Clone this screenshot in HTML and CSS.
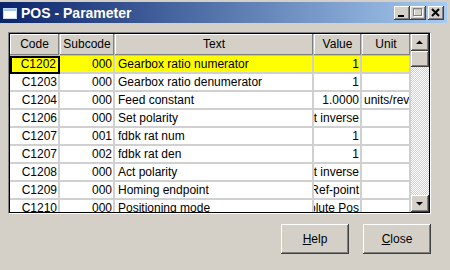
FILE: index.html
```html
<!DOCTYPE html>
<html lang="en">
<head>
  <meta charset="UTF-8">
  <title>POS - Parameter</title>
  <link rel="stylesheet" href="styles.css">
</head>
<body>
  <div class="window">
    <div class="titlebar">
      <svg class="app-icon" width="14" height="11" viewBox="0 0 14 11">
        <rect x="0.5" y="0.5" width="13" height="10" fill="#fff" stroke="#c8d8f0"/>
        <rect x="1" y="1" width="12" height="2" fill="#a6caf0"/>
      </svg>
      <span class="title">POS - Parameter</span>
      <div class="caption-buttons">
        <div class="cap-btn">
          <svg width="16" height="14" viewBox="0 0 16 14"><rect x="4" y="9" width="6" height="2" fill="#000"/></svg>
        </div>
        <div class="cap-btn">
          <svg width="16" height="14" viewBox="0 0 16 14">
            <rect x="4.5" y="3.5" width="8" height="7" fill="none" stroke="#fff"/>
            <rect x="3.5" y="2.5" width="8" height="7" fill="none" stroke="#808080"/>
            <rect x="3.5" y="2.5" width="8" height="1" fill="#808080"/>
          </svg>
        </div>
        <div class="cap-btn close">
          <svg width="16" height="14" viewBox="0 0 16 14">
            <path d="M4 3 L11 10 M11 3 L4 10" stroke="#000" stroke-width="2"/>
          </svg>
        </div>
      </div>
    </div>

    <div class="client">
      <div class="grid-frame">
        <div class="grid">
          <div class="head">Code</div>
          <div class="head">Subcode</div>
          <div class="head">Text</div>
          <div class="head">Value</div>
          <div class="head">Unit</div>

          <div class="cell num selected row-hl focus">C1202</div>
          <div class="cell num row-hl">000</div>
          <div class="cell row-hl">Gearbox ratio numerator</div>
          <div class="cell num row-hl"><span>1</span></div>
          <div class="cell unit row-hl"></div>

          <div class="cell num">C1203</div>
          <div class="cell num">000</div>
          <div class="cell">Gearbox ratio denumerator</div>
          <div class="cell num"><span>1</span></div>
          <div class="cell unit"></div>

          <div class="cell num">C1204</div>
          <div class="cell num">000</div>
          <div class="cell">Feed constant</div>
          <div class="cell num"><span>1.0000</span></div>
          <div class="cell unit">units/rev</div>

          <div class="cell num">C1206</div>
          <div class="cell num">000</div>
          <div class="cell">Set polarity</div>
          <div class="cell num"><span>Not inverse</span></div>
          <div class="cell unit"></div>

          <div class="cell num">C1207</div>
          <div class="cell num">001</div>
          <div class="cell">fdbk rat num</div>
          <div class="cell num"><span>1</span></div>
          <div class="cell unit"></div>

          <div class="cell num">C1207</div>
          <div class="cell num">002</div>
          <div class="cell">fdbk rat den</div>
          <div class="cell num"><span>1</span></div>
          <div class="cell unit"></div>

          <div class="cell num">C1208</div>
          <div class="cell num">000</div>
          <div class="cell">Act polarity</div>
          <div class="cell num"><span>Not inverse</span></div>
          <div class="cell unit"></div>

          <div class="cell num">C1209</div>
          <div class="cell num">000</div>
          <div class="cell">Homing endpoint</div>
          <div class="cell num"><span>Ref-point</span></div>
          <div class="cell unit"></div>

          <div class="cell num">C1210</div>
          <div class="cell num">000</div>
          <div class="cell">Positioning mode</div>
          <div class="cell num"><span>Absolute Pos</span></div>
          <div class="cell unit"></div>
        </div>

        <div class="scrollbar">
          <div class="sb-btn">
            <svg width="17" height="17" viewBox="0 0 17 17"><path d="M5 10 H12 L8.5 6.5 Z" fill="#000"/></svg>
          </div>
          <div class="sb-thumb"></div>
          <div class="sb-track"></div>
          <div class="sb-btn">
            <svg width="17" height="17" viewBox="0 0 17 17"><path d="M5 7 H12 L8.5 10.5 Z" fill="#000"/></svg>
          </div>
        </div>
      </div>

      <div class="actions">
        <button class="btn"><u>H</u>elp</button>
        <button class="btn"><u>C</u>lose</button>
      </div>
    </div>
  </div>
</body>
</html>
```

FILE: styles.css
```css
body {
  margin: 0;
  width: 450px;
  height: 270px;
  overflow: hidden;
  background: #d4d0c8;
  font-family: "Liberation Sans", Arial, sans-serif;
  font-size: 12px;
  color: #000;
}

.window {
  height: 270px;
  padding-top: 2px;
  padding-right: 3px;
  box-sizing: border-box;
  background: #d4d0c8;
  display: flex;
  flex-direction: column;
}

/* caption */
.titlebar {
  height: 21px;
  display: flex;
  align-items: center;
  background: linear-gradient(to right, #0a246a, #a6caf0);
  color: #fff;
  padding-left: 3px;
}
.app-icon {
  display: block;
  margin-top: 2px;
}
.title {
  margin-left: 4px;
  font-weight: bold;
  font-size: 14px;
}
.caption-buttons {
  margin-left: auto;
  margin-right: 3px;
  display: flex;
}
.cap-btn {
  width: 16px;
  height: 14px;
  background: #d4d0c8;
  box-shadow: inset -1px -1px #404040, inset 1px 1px #fff, inset -2px -2px #808080;
}
.cap-btn svg {
  display: block;
}
.cap-btn.close {
  margin-left: 2px;
}

/* client area */
.client {
  flex: 1;
  padding: 9px 16px 0 8px;
}
.grid-frame {
  display: flex;
  width: 419px;
  height: 178px;
  border: 1px solid;
  border-color: #808080 #fff #fff #808080;
  box-shadow: inset 1px 1px #000, inset -1px -1px #000;
  padding: 1px;
  background: #fff;
}
.grid {
  display: grid;
  grid-template-columns: 50px 55px 199px 48px 49px;
  grid-auto-rows: 18px;
  grid-template-rows: 22px;
  overflow: hidden;
  width: 401px;
}
.head {
  background: #d4d0c8;
  text-align: center;
  line-height: 21px;
  box-shadow: inset -1px -1px #808080, inset 1px 1px #fff;
  border-right: 1px solid #c0c0c0;
  border-bottom: 1px solid #c0c0c0;
}
.cell {
  line-height: 16px;
  padding: 0 2px 0 3px;
  border-right: 2px solid #d0d0d0;
  border-bottom: 2px solid #d0d0d0;
  white-space: nowrap;
  overflow: hidden;
}
.num {
  display: flex;
  justify-content: flex-end;
  padding: 0 1px 0 0;
}
.num span {
  flex-shrink: 0;
}
.selected {
  padding-right: 2px;
}
.unit {
  padding-left: 2px;
}
.row-hl {
  background: #ffff00;
}
.focus {
  outline: 2px solid #000;
  outline-offset: -2px;
}

/* scroll bar */
.scrollbar {
  width: 18px;
  display: flex;
  flex-direction: column;
}
.sb-btn,
.sb-thumb {
  height: 17px;
  background: #d4d0c8;
  box-shadow: inset -1px -1px #404040, inset 1px 1px #fff, inset -2px -2px #808080;
}
.sb-btn svg {
  display: block;
}
.sb-thumb {
  height: 16px;
}
.sb-track {
  flex: 1;
  background: repeating-conic-gradient(#d4d0c8 0 25%, #fff 0 50%) 0 0 / 2px 2px;
}

/* buttons */
.actions {
  display: flex;
  justify-content: flex-end;
  gap: 14px;
  margin-top: 10px;
}
.btn {
  width: 68px;
  height: 30px;
  font-family: "Liberation Sans", Arial, sans-serif;
  font-size: 12px;
  color: #000;
  background: #d4d0c8;
  border: none;
  padding: 0;
  box-shadow: inset -1px -1px #404040, inset 1px 1px #fff, inset -2px -2px #808080;
}
```
